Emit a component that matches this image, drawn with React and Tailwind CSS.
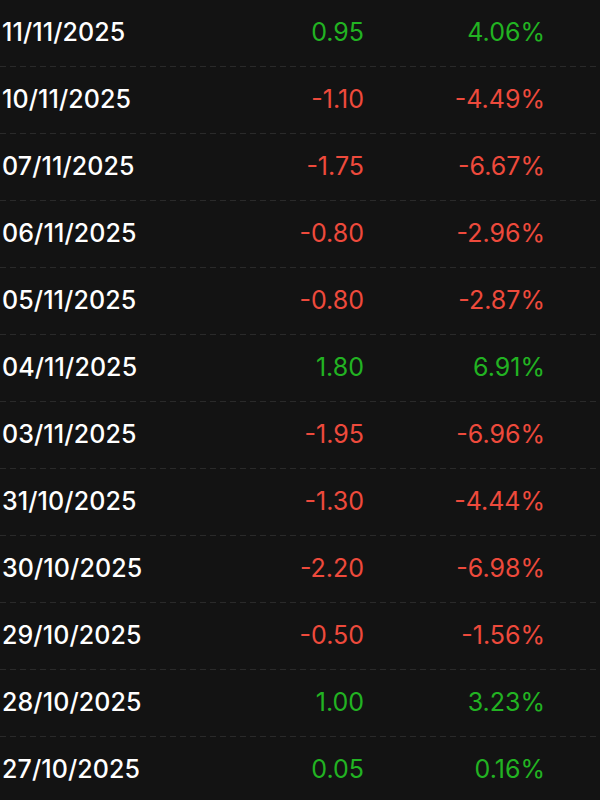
const rows = [
  ["11/11/2025", "0.95", "4.06%"],
  ["10/11/2025", "-1.10", "-4.49%"],
  ["07/11/2025", "-1.75", "-6.67%"],
  ["06/11/2025", "-0.80", "-2.96%"],
  ["05/11/2025", "-0.80", "-2.87%"],
  ["04/11/2025", "1.80", "6.91%"],
  ["03/11/2025", "-1.95", "-6.96%"],
  ["31/10/2025", "-1.30", "-4.44%"],
  ["30/10/2025", "-2.20", "-6.98%"],
  ["29/10/2025", "-0.50", "-1.56%"],
  ["28/10/2025", "1.00", "3.23%"],
  ["27/10/2025", "0.05", "0.16%"],
];

export default function App() {
  return (
    <div
      className="w-[600px] h-[800px] overflow-hidden bg-[#131313]"
      style={{ fontFamily: "Inter, 'Noto Sans', sans-serif" }}
    >
      <div>
        {rows.map(([date, change, pct], i) => {
          const up = !change.startsWith("-");
          const color = up ? "text-[#22b322]" : "text-[#ee4a3c]";
          return (
            <div key={date}>
              <div className="flex items-center h-[66px] pl-[2px] pr-[55px]">
                <span className="flex-1 text-[25px] font-medium text-white tracking-[0.1px]">
                  {date}
                </span>
                <span className={`w-[130px] text-right text-[25px] ${color}`}>
                  {change}
                </span>
                <span className={`w-[181px] text-right text-[25px] ${color}`}>
                  {pct}
                </span>
              </div>
              {i < rows.length - 1 && (
                <div className="h-px bg-[repeating-linear-gradient(90deg,#2a2a2a_0_6px,transparent_6px_10px)]" />
              )}
            </div>
          );
        })}
      </div>
    </div>
  );
}
